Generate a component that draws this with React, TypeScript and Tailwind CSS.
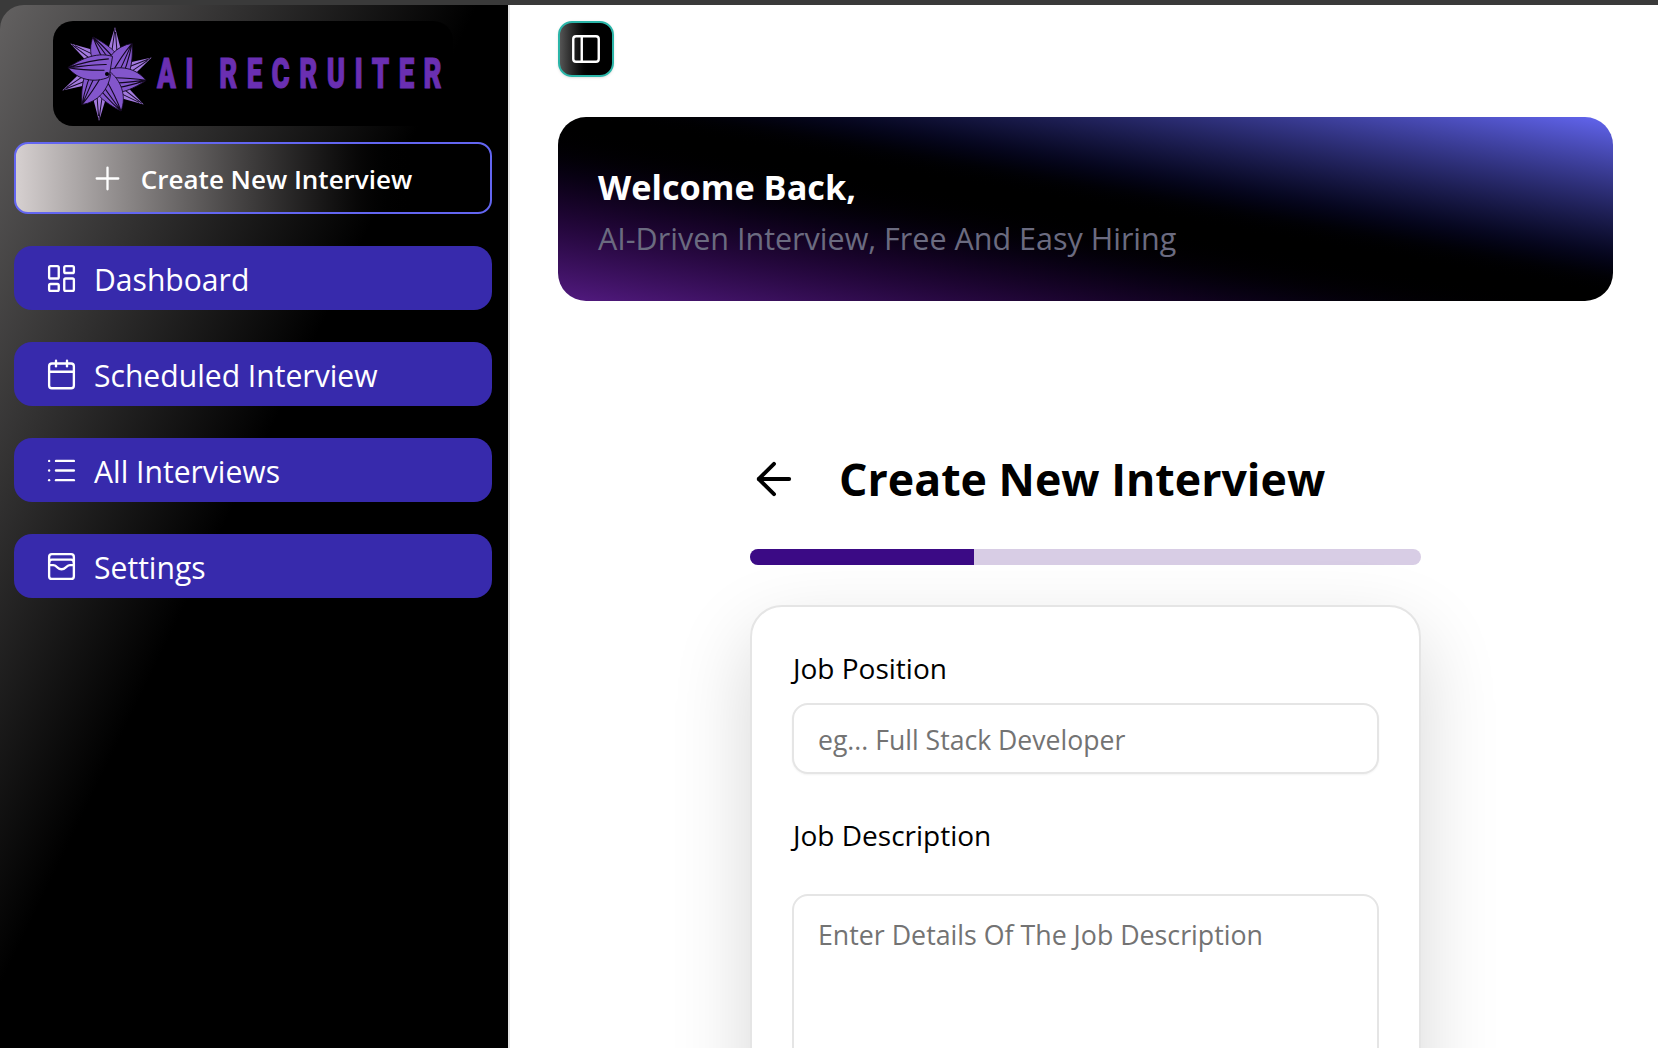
import { ArrowLeft, Calendar, LayoutDashboard, List, PanelLeft, Plus, WalletCards, type LucideIcon } from "lucide-react";

const NAV_ITEMS: { label: string; icon: LucideIcon }[] = [
  { label: "Dashboard", icon: LayoutDashboard },
  { label: "Scheduled Interview", icon: Calendar },
  { label: "All Interviews", icon: List },
  { label: "Settings", icon: WalletCards },
];

const BLADES = [0, 60, 120, 180, 240, 300];

const LogoMark = () => (
  <svg viewBox="-50 -50 100 100" className="h-[100px] w-[100px] shrink-0">
    {/* thin spikes behind the big blades */}
    {BLADES.map((angle) => (
      <g key={`spike-${angle}`} transform={`rotate(${angle})`}>
        <path d="M1 -24L8 -47L15 -20Z" fill="#a37ade" />
        <path d="M5 -24L8 -45M10 -22L8.5 -42" fill="none" stroke="#160a28" strokeWidth="1" />
      </g>
    ))}
    {BLADES.map((angle) => (
      <g key={angle} transform={`rotate(${angle})`}>
        <path d="M-2 3C-14 -6 -20 -22 -14 -37C-4 -32 14 -22 18 -4L2 2Z" fill="#8356cc" stroke="#12081f" strokeWidth="0.8" />
        <path
          d="M2 -4C-4 -14 -10 -26 -14 -37M8 -5C2 -16 -8 -28 -14 -37M14 -6C6 -18 -6 -30 -14 -37"
          fill="none"
          stroke="#12081f"
          strokeWidth="1.1"
        />
      </g>
    ))}
    <circle r="2" fill="#000" />
  </svg>
);

const Sidebar = () => (
  <aside className="flex w-[510px] shrink-0 flex-col rounded-tl-[24px] border-r-2 border-[#e5e5e5] bg-[linear-gradient(to_bottom_right,#636161,#000_47%)] px-[14px] pt-[16px]">
    <div className="ml-[39px] flex h-[105px] w-[400px] items-center overflow-hidden rounded-[20px] bg-black pl-[4px]">
      <LogoMark />
      <span className="inline-block origin-left scale-x-[0.66] whitespace-nowrap font-['Roboto',sans-serif] text-[42px] leading-none font-black tracking-[14.2px] text-[#6a2fb2] [-webkit-text-stroke:1px_#6a2fb2]">
        AI RECRUITER
      </span>
    </div>
    <button className="mt-[16px] flex h-[72px] w-[478px] items-center justify-center gap-[15px] rounded-[14px] border-2 border-[#6366f1] bg-gradient-to-r from-[#d6d0d0] to-black to-[85%] pr-[5px] text-[26px] font-semibold text-white">
      <Plus className="h-[37px] w-[37px]" strokeWidth={1.5} />
      <span className="pt-[2px]">Create New Interview</span>
    </button>
    <nav className="mt-[32px] flex flex-col gap-[32px]">
      {NAV_ITEMS.map(({ label, icon: Icon }) => (
        <a key={label} className="flex h-[64px] w-[478px] items-center gap-[16px] rounded-[18px] bg-[#372aac] pl-[31px] text-[30.1px] text-white">
          <Icon className="h-[33px] w-[33px]" strokeWidth={1.7} />
          <span className="pt-[3px]">{label}</span>
        </a>
      ))}
    </nav>
  </aside>
);

export default function App() {
  return (
    <div className="flex h-screen flex-col overflow-hidden bg-[#3a3a3a] font-['Open_Sans',sans-serif]">
      <div className="h-[5px] shrink-0" />
      <div className="flex min-h-0 flex-1">
        <Sidebar />
        <main className="min-w-0 flex-1 bg-white pt-[16px] pl-[48px] pr-[45px]">
          <button className="flex h-[56px] w-[56px] items-center justify-center rounded-[14px] border-2 border-[#2bb5a8] bg-gradient-to-r from-[#555] to-black to-[60%] text-white shadow-sm">
            <PanelLeft className="h-[34px] w-[34px]" strokeWidth={1.7} />
          </button>
          <section className="mt-[40px] flex h-[184px] flex-col justify-center rounded-[28px] bg-gradient-to-tr from-[#521a80] via-black to-[#6366f1] pt-[4px] pl-[40px]">
            <h2 className="text-[34.3px] leading-[48px] font-bold text-white">Welcome Back,</h2>
            <p className="mt-[5px] text-[30.5px] leading-[44px] text-[#6b6b80]">AI-Driven Interview, Free And Easy Hiring</p>
          </section>
          <div className="mx-auto mt-[148px] w-[671px]">
            <div className="flex h-[60px] items-center gap-[39px]">
              <ArrowLeft className="-ml-[2px] h-[52px] w-[52px] shrink-0 text-black" strokeWidth={1.8} />
              <h1 className="text-[44.7px] leading-[60px] font-bold text-black">Create New Interview</h1>
            </div>
            <div className="mt-[40px] h-[16px] overflow-hidden rounded-full bg-[#d8cde5]">
              <div className="h-full w-[33.4%] bg-[#3b0a85]" />
            </div>
            <div className="mt-[40px] h-[600px] rounded-[32px] border-2 border-[#e5e5e5] bg-white px-[40px] pt-[43px] shadow-[0_30px_80px_rgba(0,0,0,0.16)]">
              <label className="block pl-[1px] text-[28px] leading-[36px] font-medium text-black">Job Position</label>
              <input
                className="mt-[17px] h-[71px] w-full rounded-[16px] border-2 border-[#e5e5e5] bg-white px-[24px] pt-[3px] text-[26.6px] shadow-xs placeholder:text-[#737373]"
                placeholder="eg... Full Stack Developer"
              />
              <label className="mt-[43px] block pl-[1px] text-[28px] leading-[36px] font-medium text-black">Job Description</label>
              <textarea
                className="mt-[41px] h-[240px] w-full resize-none rounded-[16px] border-2 border-[#e5e5e5] bg-white px-[24px] py-[19px] text-[26.75px] placeholder:text-[#737373]"
                placeholder="Enter Details Of The Job Description"
              />
            </div>
          </div>
        </main>
      </div>
    </div>
  );
}
